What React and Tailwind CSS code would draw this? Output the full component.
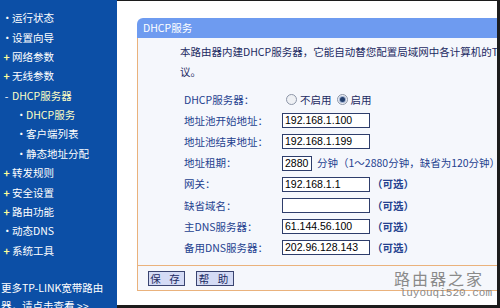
const cjk = { fontFamily: '"Noto Sans CJK SC", "Liberation Sans", sans-serif' };

const menu = [
  { mark: '•', label: '运行状态' },
  { mark: '•', label: '设置向导' },
  { mark: '+', label: '网络参数' },
  { mark: '+', label: '无线参数' },
  { mark: '-', label: 'DHCP服务器', active: true },
  { mark: '•', label: 'DHCP服务', sub: true, active: true },
  { mark: '•', label: '客户端列表', sub: true },
  { mark: '•', label: '静态地址分配', sub: true },
  { mark: '+', label: '转发规则' },
  { mark: '+', label: '安全设置' },
  { mark: '+', label: '路由功能' },
  { mark: '•', label: '动态DNS' },
  { mark: '+', label: '系统工具' },
];

function Sidebar() {
  return (
    <aside className="w-[117px] shrink-0 bg-[#0c4fa6] pt-[9px] text-[10.5px] text-white" style={cjk}>
      {menu.map((m) => (
        <div key={m.label} className={`flex h-[19.35px] items-center ${m.sub ? 'pl-[16px]' : 'pl-[2px]'}`}>
          <span className={`w-[9px] text-center leading-none ${m.mark === '+' ? 'text-[#ffff99] font-bold' : 'text-white'}`}>
            {m.mark}
          </span>
          <span className={`ml-[1px] leading-none ${m.active ? 'text-[#ffffc4]' : 'text-white'}`}>{m.label}</span>
        </div>
      ))}
      <div className="mt-[19px] pl-[1px] leading-[18px] whitespace-nowrap">
        <div>更多TP-LINK宽带路由</div>
        <div>器，请点击查看 &gt;&gt;</div>
      </div>
    </aside>
  );
}

function Input({ value, w = 'w-[88px]' }) {
  return (
    <div
      className={`${w} h-[15px] shrink-0 overflow-hidden whitespace-nowrap border border-[#2e3d6b] bg-white pl-[2px] text-[10.5px] leading-[13px] text-black`}
      style={{ fontFamily: '"Liberation Sans", sans-serif' }}
    >
      {value}
    </div>
  );
}

function Radio({ checked }) {
  return (
    <span className="flex h-[11px] w-[11px] items-center justify-center rounded-full border border-[#8d96a8] bg-[#eef0f4]">
      {checked && <span className="h-[5px] w-[5px] rounded-full bg-[#24406e] ring-1 ring-[#9fb0d0]" />}
    </span>
  );
}

function Row({ label, children }) {
  return (
    <div className="flex h-[21.2px] items-center">
      <div className="w-[98px] shrink-0 pl-[46px] box-content text-[#24418f]">{label}</div>
      {children}
    </div>
  );
}

const opt = <span className="ml-[2px] text-[#24418f] font-bold">（可选）</span>;

export default function App() {
  return (
    <div className="flex h-[308px] w-[500px] overflow-hidden bg-white" style={cjk}>
      <Sidebar />
      <main className="relative flex-1 overflow-hidden border-t border-r-[3px] border-b-[3px] border-[#1c1c1c] bg-white pt-[17px] pl-[20px]">
        <div className="w-[420px]">
          <div className="flex h-[20px] items-center rounded-tl-[6px] bg-[#6e9bf0] pl-[6px] text-[10.5px] text-white">
            DHCP服务
          </div>
          <div className="border-l border-[#eab27c] bg-[#f5f7fc] text-[10.5px]">
            <div className="h-[228px] border-b border-[#eab27c]">
              <p className="pt-[4px] pl-[42px] leading-[20px] whitespace-nowrap text-[#1c2a62]">
                本路由器内建DHCP服务器，它能自动替您配置局域网中各计算机的TCP/IP协
                <br />
                议。
              </p>
              <div className="mt-[7px]">
                <Row label="DHCP服务器：">
                  <span className="ml-[4px] flex items-center gap-[3px] text-[#1c2a62]">
                    <Radio /> 不启用
                  </span>
                  <span className="ml-[5px] flex items-center gap-[3px] text-[#1c2a62]">
                    <Radio checked /> 启用
                  </span>
                </Row>
                <Row label="地址池开始地址：">
                  <Input value="192.168.1.100" />
                </Row>
                <Row label="地址池结束地址：">
                  <Input value="192.168.1.199" />
                </Row>
                <Row label="地址租期：">
                  <Input value="2880" w="w-[30px]" />
                  <span className="ml-[5px] whitespace-nowrap text-[#24418f]">分钟（1～2880分钟，缺省为120分钟）</span>
                </Row>
                <Row label="网关：">
                  <Input value="192.168.1.1" />
                  {opt}
                </Row>
                <Row label="缺省域名：">
                  <Input value="" />
                  {opt}
                </Row>
                <Row label="主DNS服务器：">
                  <Input value="61.144.56.100" />
                  {opt}
                </Row>
                <Row label="备用DNS服务器：">
                  <Input value="202.96.128.143" />
                  {opt}
                </Row>
              </div>
            </div>
            <div className="flex h-[25px] items-center gap-[11px] border-b border-[#eab27c] pl-[10px]">
              <button className="h-[15px] w-[37px] border border-[#3a4470] bg-[#d4dbf5] text-[10.5px] leading-[13px] tracking-[3px] text-[#1c2a62]">
                保 存
              </button>
              <button className="h-[15px] w-[38px] border border-[#3a4470] bg-[#d4dbf5] text-[10.5px] leading-[13px] tracking-[3px] text-[#1c2a62]">
                帮 助
              </button>
            </div>
          </div>
        </div>
        <div className="absolute right-[5px] bottom-[6px] flex flex-col items-end text-[#8a8a8a]">
          <span className="pr-[8px] text-[16px] leading-[18px] tracking-[2px]">路由器之家</span>
          <span className="text-[11px] leading-[12px]" style={{ fontFamily: '"Liberation Mono", monospace' }}>
            luyouqi520.com
          </span>
        </div>
      </main>
    </div>
  );
}
